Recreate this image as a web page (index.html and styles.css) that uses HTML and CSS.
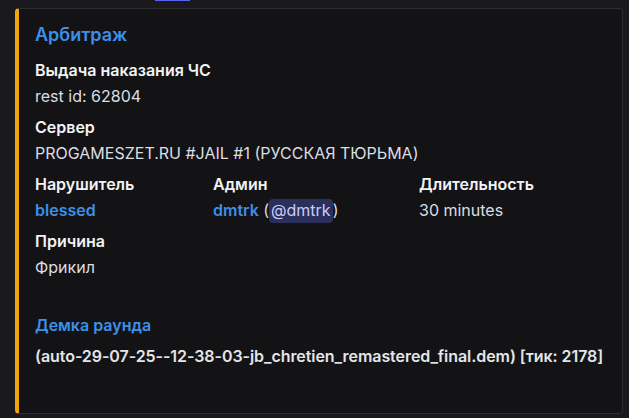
FILE: index.html
```html
<!DOCTYPE html>
<html lang="ru">
<head>
<meta charset="utf-8">
<link rel="stylesheet" href="styles.css">
</head>
<body>
<div class="prev-mark"></div>
<div class="wrap">
  <div class="embed">
    <div class="title">Арбитраж</div>
    <div class="field">
      <div class="name">Выдача наказания ЧС</div>
      <div class="value">rest id: 62804</div>
    </div>
    <div class="field">
      <div class="name">Сервер</div>
      <div class="value">PROGAMESZET.RU #JAIL #1 (РУССКАЯ ТЮРЬМА)</div>
    </div>
    <div class="inline-row">
      <div class="field">
        <div class="name">Нарушитель</div>
        <div class="value"><span class="link">blessed</span></div>
      </div>
      <div class="field">
        <div class="name">Админ</div>
        <div class="value"><span class="link">dmtrk</span> (<span class="mention">@dmtrk</span>)</div>
      </div>
      <div class="field">
        <div class="name">Длительность</div>
        <div class="value">30 minutes</div>
      </div>
    </div>
    <div class="field">
      <div class="name">Причина</div>
      <div class="value">Фрикил</div>
    </div>
    <div class="demo">
      <div class="demo-link">Демка раунда</div>
      <div class="demo-file">(auto-29-07-25--12-38-03-jb_chretien_remastered_final.dem) [тик: 2178]</div>
    </div>
  </div>
</div>
</body>
</html>
```
FILE: styles.css
```css
html, body {
  margin: 0;
  padding: 0;
  background: #1a1a1e;
  font-family: "Inter", "Noto Sans", sans-serif;
  width: 629px;
  height: 418px;
  overflow: hidden;
  position: relative;
}
.prev-mark {
  position: absolute;
  left: 155px;
  top: 0;
  width: 35px;
  height: 1px;
  background: #5865f2;
}
.wrap {
  padding: 8px 6px 0 15px;
}
.embed {
  box-sizing: border-box;
  width: 608px;
  height: 406px;
  background: #131316;
  border: 1px solid #2c2c31;
  border-left: 4px solid #f0a30a;
  border-radius: 4px;
  padding: 15px 16px 0 16px;
}
.title {
  font-size: 18px;
  line-height: 22px;
  font-weight: 600;
  color: #3d8fe8;
  margin-bottom: 14px;
}
.field {
  margin-bottom: 11px;
}
.name {
  font-size: 16px;
  line-height: 20px;
  font-weight: 600;
  color: #f2f3f5;
  margin-bottom: 6px;
}
.value {
  font-size: 16px;
  line-height: 20px;
  color: #dbdee1;
}
.inline-row {
  display: grid;
  grid-template-columns: 178px 206px 1fr;
}
.link {
  color: #3d8fe8;
  font-weight: 600;
}
.mention {
  background: #2b2f5c;
  color: #c9cdfb;
  border-radius: 4px;
  padding: 1px 2px 3px;
}
.demo {
  margin-top: 38px;
}
.demo-link {
  font-size: 16px;
  line-height: 20px;
  font-weight: 600;
  color: #3d8fe8;
  margin-bottom: 11px;
}
.demo-file {
  font-size: 16px;
  line-height: 20px;
  font-weight: 600;
  color: #e3e5e8;
  white-space: nowrap;
  letter-spacing: -0.06px;
}
```
